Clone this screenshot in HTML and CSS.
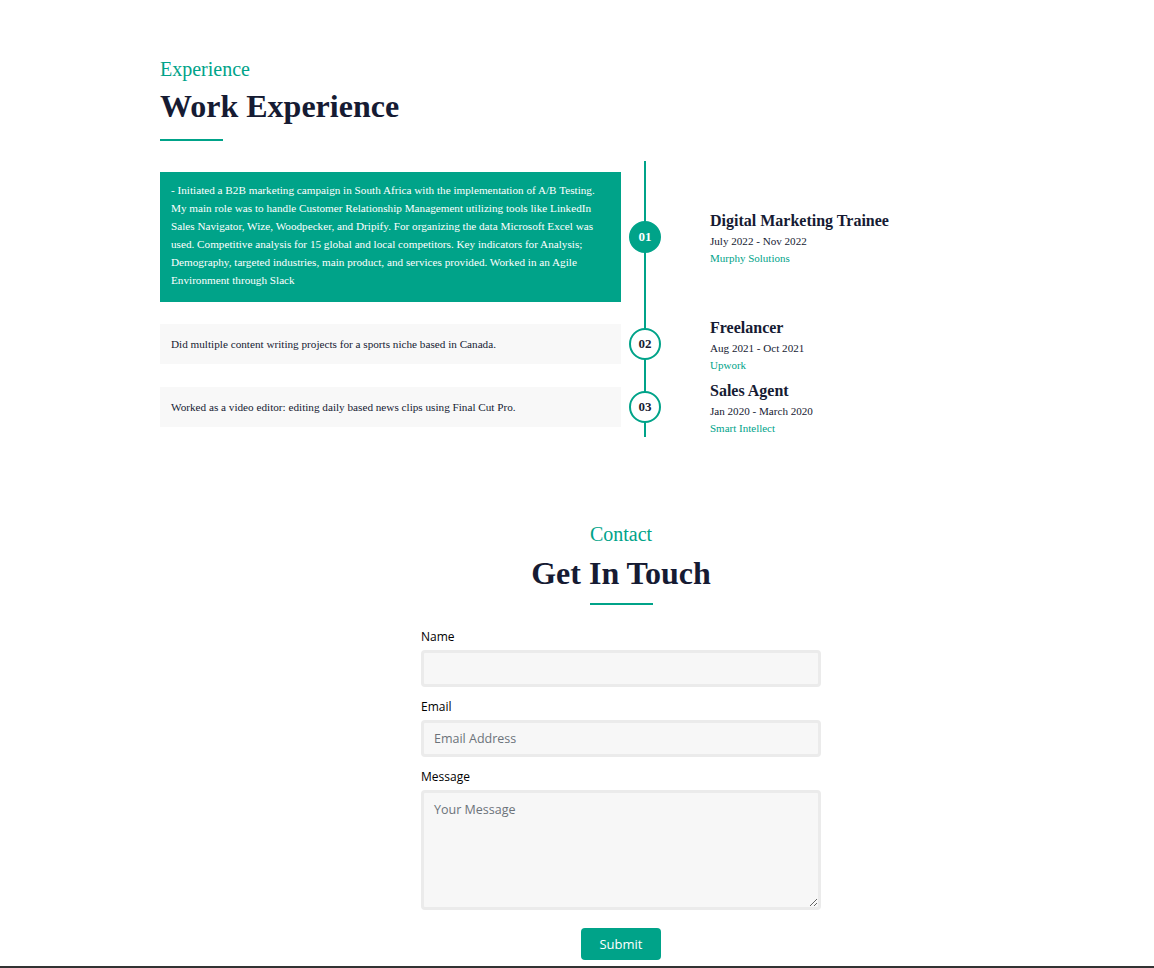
FILE: index.html
```html
<!DOCTYPE html>
<html>
<head>
<meta charset="utf-8">
<link rel="stylesheet" href="styles.css">
</head>
<body>
<main class="page">
  <section class="experience">
    <p class="eyebrow">Experience</p>
    <h2 class="heading">Work Experience</h2>
    <div class="rule"></div>

    <div class="timeline">
      <div class="row row-1">
        <div class="box box-active">- Initiated a B2B marketing campaign in South Africa with the implementation of A/B Testing. My main role was to handle Customer Relationship Management utilizing tools like LinkedIn Sales Navigator, Wize, Woodpecker, and Dripify. For organizing the data Microsoft Excel was used. Competitive analysis for 15 global and local competitors. Key indicators for Analysis; Demography, targeted industries, main product, and services provided. Worked in an Agile Environment through Slack</div>
        <div class="marker"><span class="dot dot-active">01</span></div>
        <div class="info">
          <h3 class="role">Digital Marketing Trainee</h3>
          <p class="dates">July 2022 - Nov 2022</p>
          <p class="company">Murphy Solutions</p>
        </div>
      </div>
      <div class="row row-2">
        <div class="box">Did multiple content writing projects for a sports niche based in Canada.</div>
        <div class="marker"><span class="dot">02</span></div>
        <div class="info">
          <h3 class="role">Freelancer</h3>
          <p class="dates">Aug 2021 - Oct 2021</p>
          <p class="company">Upwork</p>
        </div>
      </div>
      <div class="row row-3">
        <div class="box">Worked as a video editor: editing daily based news clips using Final Cut Pro.</div>
        <div class="marker"><span class="dot">03</span></div>
        <div class="info">
          <h3 class="role">Sales Agent</h3>
          <p class="dates">Jan 2020 - March 2020</p>
          <p class="company">Smart Intellect</p>
        </div>
      </div>
    </div>
  </section>

  <section class="contact">
    <p class="eyebrow">Contact</p>
    <h2 class="heading">Get In Touch</h2>
    <div class="rule"></div>

    <form class="form">
      <label class="label" for="name">Name</label>
      <input class="field" id="name" type="text">
      <label class="label" for="email">Email</label>
      <input class="field" id="email" type="email" placeholder="Email Address">
      <label class="label" for="msg">Message</label>
      <textarea class="field area" id="msg" placeholder="Your Message"></textarea>
      <button class="submit" type="button">Submit</button>
    </form>
  </section>
</main>
<footer class="footer"></footer>
</body>
</html>
```

FILE: styles.css
```css
* { box-sizing: border-box; }

html, body {
  margin: 0;
  padding: 0;
  background: #ffffff;
}

body {
  font-family: "Liberation Serif", "Times New Roman", serif;
  color: #161b33;
}

.page {
  margin-left: 160px;
  width: 922px;
  padding-top: 57px;
}

.eyebrow {
  margin: 0;
  font-size: 20px;
  line-height: 24px;
  color: #00a389;
}

.heading {
  margin: 6px 0 0;
  font-size: 32px;
  line-height: 38px;
  font-weight: 700;
  color: #161b33;
}

.rule {
  width: 63px;
  height: 2px;
  background: #00a389;
  margin-top: 14px;
}

/* Timeline */
.timeline {
  position: relative;
  margin-top: 20px;
  padding: 11px 0 1px;
}

.timeline::before {
  content: "";
  position: absolute;
  top: 0;
  bottom: 0;
  left: 484px;
  width: 2px;
  background: #00a389;
}

.row {
  display: grid;
  grid-template-columns: 461px 48px 1fr;
  align-items: center;
}

.row-2 { margin-top: 12px; }
.row-3 { margin-top: 4px; }

.box {
  background: #f8f8f8;
  font-size: 11.2px;
  line-height: 18px;
  padding: 11px;
  color: #161b33;
}

.box-active {
  background: #00a389;
  color: #ffffff;
  padding: 9px 11px 13px;
}

.marker {
  display: flex;
  justify-content: center;
  position: relative;
  z-index: 1;
}

.dot {
  width: 32px;
  height: 32px;
  border-radius: 50%;
  border: 2px solid #00a389;
  background: #ffffff;
  display: flex;
  align-items: center;
  justify-content: center;
  font-size: 13px;
  font-weight: 700;
  color: #161b33;
}

.dot-active {
  background: #00a389;
  color: #ffffff;
}

.info {
  padding-left: 41px;
  padding-top: 4px;
}

.row-1 .info {
  padding-top: 3px;
}

.role {
  margin: 0;
  font-size: 16px;
  line-height: 20px;
  font-weight: 700;
  color: #161b33;
}

.dates {
  margin: 2px 0 0;
  font-size: 11.1px;
  line-height: 16px;
}

.company {
  margin: 1px 0 0;
  font-size: 11px;
  line-height: 16px;
  color: #00a389;
}

/* Contact */
.contact {
  margin-top: 85px;
  display: flex;
  flex-direction: column;
  align-items: center;
}

.contact .heading { margin-top: 8px; }
.contact .rule { margin-top: 11px; }

.form {
  width: 400px;
  margin-top: 23px;
  display: flex;
  flex-direction: column;
  font-family: "Open Sans", "Noto Sans", sans-serif;
}

.label {
  font-size: 12px;
  line-height: 18px;
  color: #000000;
  margin-bottom: 4px;
}

.field {
  width: 100%;
  height: 37px;
  background: #f7f7f7;
  border: 3px solid #ebebeb;
  border-radius: 4px;
  padding: 0 10px;
  font-family: "Open Sans", "Noto Sans", sans-serif;
  font-size: 12.5px;
  color: #222;
  margin-bottom: 11px;
  outline: none;
}

.field::placeholder {
  color: #6c737a;
}

.area {
  height: 120px;
  padding: 8px 10px;
  resize: vertical;
  margin-bottom: 18px;
}

.submit {
  align-self: center;
  width: 80px;
  height: 32px;
  border: none;
  border-radius: 4px;
  background: #00a389;
  color: #ffffff;
  font-family: "Open Sans", "Noto Sans", sans-serif;
  font-size: 13px;
}

.footer {
  margin-top: 6px;
  height: 60px;
  background: #333333;
}
```
